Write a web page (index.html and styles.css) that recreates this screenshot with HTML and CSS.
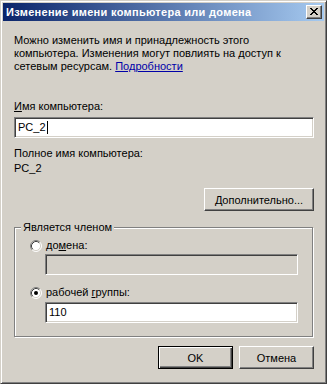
FILE: index.html
```html
<!DOCTYPE html>
<html lang="ru">
<head>
<meta charset="utf-8">
<title>Изменение имени компьютера или домена</title>
<link rel="stylesheet" href="styles.css">
</head>
<body>
<div class="window">
  <div class="titlebar">
    <span class="title">Изменение имени компьютера или домена</span>
    <span class="close">
      <svg width="8" height="7" viewBox="0 0 8 7" shape-rendering="crispEdges">
        <path fill="#000" d="M0 0h2v1h-2zM6 0h2v1h-2zM1 1h2v1h-2zM5 1h2v1h-2zM2 2h4v1h-4zM3 3h2v1h-2zM2 4h4v1h-4zM1 5h2v1h-2zM5 5h2v1h-2zM0 6h2v1h-2zM6 6h2v1h-2z"/>
      </svg>
    </span>
  </div>
  <div class="content">
    <p class="intro">Можно изменить имя и принадлежность этого<br>компьютера. Изменения могут повлиять на доступ к<br>сетевым ресурсам. <a class="link">Подробности</a></p>
    <div class="label name-label"><u>И</u>мя компьютера:</div>
    <div class="field field-main">PC_2<span class="caret"></span></div>
    <div class="label full-label">Полное имя компьютера:</div>
    <div class="label full-value">PC_2</div>
    <div class="row-right">
      <div class="btn btn-wide"><u>Д</u>ополнительно...</div>
    </div>
    <fieldset class="group">
      <legend class="group-title">Является членом</legend>
      <div class="radio-row radio-first">
        <svg class="radio" width="12" height="12" viewBox="0 0 12 12">
          <circle cx="6" cy="6" r="5" fill="#fff"/>
          <path d="M2.11 9.89A5.5 5.5 0 0 1 9.89 2.11" stroke="#808080" fill="none"/>
          <path d="M9.89 2.11A5.5 5.5 0 0 1 2.11 9.89" stroke="#fff" fill="none"/>
          <path d="M2.82 9.18A4.5 4.5 0 0 1 9.18 2.82" stroke="#404040" fill="none"/>
          <path d="M9.18 2.82A4.5 4.5 0 0 1 2.82 9.18" stroke="#d4d0c8" fill="none"/>
        </svg>
        <span>до<u>м</u>ена:</span>
      </div>
      <div class="field field-sub field-disabled"></div>
      <div class="radio-row radio-second">
        <svg class="radio" width="12" height="12" viewBox="0 0 12 12">
          <circle cx="6" cy="6" r="5" fill="#fff"/>
          <path d="M2.11 9.89A5.5 5.5 0 0 1 9.89 2.11" stroke="#808080" fill="none"/>
          <path d="M9.89 2.11A5.5 5.5 0 0 1 2.11 9.89" stroke="#fff" fill="none"/>
          <path d="M2.82 9.18A4.5 4.5 0 0 1 9.18 2.82" stroke="#404040" fill="none"/>
          <path d="M9.18 2.82A4.5 4.5 0 0 1 2.82 9.18" stroke="#d4d0c8" fill="none"/>
          <circle cx="6" cy="6" r="2" fill="#000"/>
        </svg>
        <span>рабочей <u>г</u>руппы:</span>
      </div>
      <div class="field field-sub">110</div>
    </fieldset>
    <div class="actions">
      <div class="btn btn-default">OK</div>
      <div class="btn">Отмена</div>
    </div>
  </div>
</div>
</body>
</html>
```

FILE: styles.css
```css
html, body {
  margin: 0;
  padding: 0;
  background: #d4d0c8;
}

body {
  font-family: "Liberation Sans", Arial, sans-serif;
  font-size: 11px;
  color: #000;
}

.window {
  width: 327px;
  height: 384px;
  box-sizing: border-box;
  background: #d4d0c8;
  border: 1px solid;
  border-color: #d4d0c8 #404040 #404040 #d4d0c8;
  box-shadow: inset 1px 1px 0 #fff, inset -1px -1px 0 #808080;
  padding: 2px;
  display: flex;
  flex-direction: column;
}

.titlebar {
  height: 18px;
  display: flex;
  align-items: center;
  background: linear-gradient(to right, #0a246a, #a6caf0);
}

.title {
  color: #fff;
  font-weight: bold;
  font-size: 11px;
  letter-spacing: 0.3px;
  padding-left: 3px;
  white-space: nowrap;
}

.close {
  margin-left: auto;
  margin-right: 2px;
  width: 16px;
  height: 14px;
  box-sizing: border-box;
  background: #d4d0c8;
  border: 1px solid;
  border-color: #fff #404040 #404040 #fff;
  box-shadow: inset -1px -1px 0 #808080;
  display: flex;
  align-items: flex-start;
  justify-content: flex-start;
  padding: 2px 0 0 3px;
}

.close svg {
  display: block;
}

.content {
  padding: 0 10px 0 11px;
  display: flex;
  flex-direction: column;
}

.intro {
  margin: 13px 0 0;
  line-height: 13px;
  white-space: nowrap;
}

.link {
  color: #0000a8;
  text-decoration: underline;
}

.label {
  line-height: 13px;
  white-space: nowrap;
}

.name-label {
  margin-top: 27px;
}

.field {
  height: 21px;
  box-sizing: border-box;
  background: #fff;
  border: 1px solid;
  border-color: #808080 #fff #fff #808080;
  box-shadow: inset 1px 1px 0 #404040, inset -1px -1px 0 #d4d0c8;
  padding: 0 0 0 3px;
  display: flex;
  align-items: center;
  line-height: 13px;
}

.field-main {
  margin-top: 4px;
}

.caret {
  display: inline-block;
  width: 1px;
  height: 13px;
  background: #000;
  margin-left: 1px;
}

.full-label {
  margin-top: 9px;
}

.full-value {
  margin-top: 2px;
}

.row-right {
  display: flex;
  justify-content: flex-end;
  margin-top: 13px;
}

.btn {
  width: 75px;
  height: 23px;
  box-sizing: border-box;
  background: #d4d0c8;
  border: 1px solid;
  border-color: #fff #404040 #404040 #fff;
  box-shadow: inset -1px -1px 0 #808080;
  display: flex;
  align-items: center;
  justify-content: center;
  white-space: nowrap;
}

.btn-wide {
  width: 110px;
}

.btn-default {
  border: 1px solid #000;
  box-shadow: inset 1px 1px 0 #fff, inset -1px -1px 0 #404040, inset -2px -2px 0 #808080;
}

.group {
  margin: 10px 1px 0 0;
  padding: 0 0 13px;
  min-width: 0;
  border: 1px solid #808080;
  box-shadow: inset 1px 1px 0 #fff, 1px 1px 0 #fff;
  display: flex;
  flex-direction: column;
}

.group-title {
  padding: 0 2px;
  margin-left: 6px;
  line-height: 13px;
  background: #d4d0c8;
}

.radio-row {
  display: flex;
  align-items: center;
  gap: 4px;
  height: 13px;
  margin-left: 15px;
  line-height: 13px;
}

.radio {
  display: block;
  flex: none;
}

.radio-first {
  margin-top: 5px;
}

.radio-second {
  margin-top: 11px;
}

.field-sub {
  margin: 2px 14px 0 30px;
}

.field-sub:last-child {
  margin-top: 3px;
}

.field-disabled {
  background: #d4d0c8;
}

.actions {
  display: flex;
  justify-content: flex-end;
  gap: 6px;
  margin-top: 9px;
}
```
